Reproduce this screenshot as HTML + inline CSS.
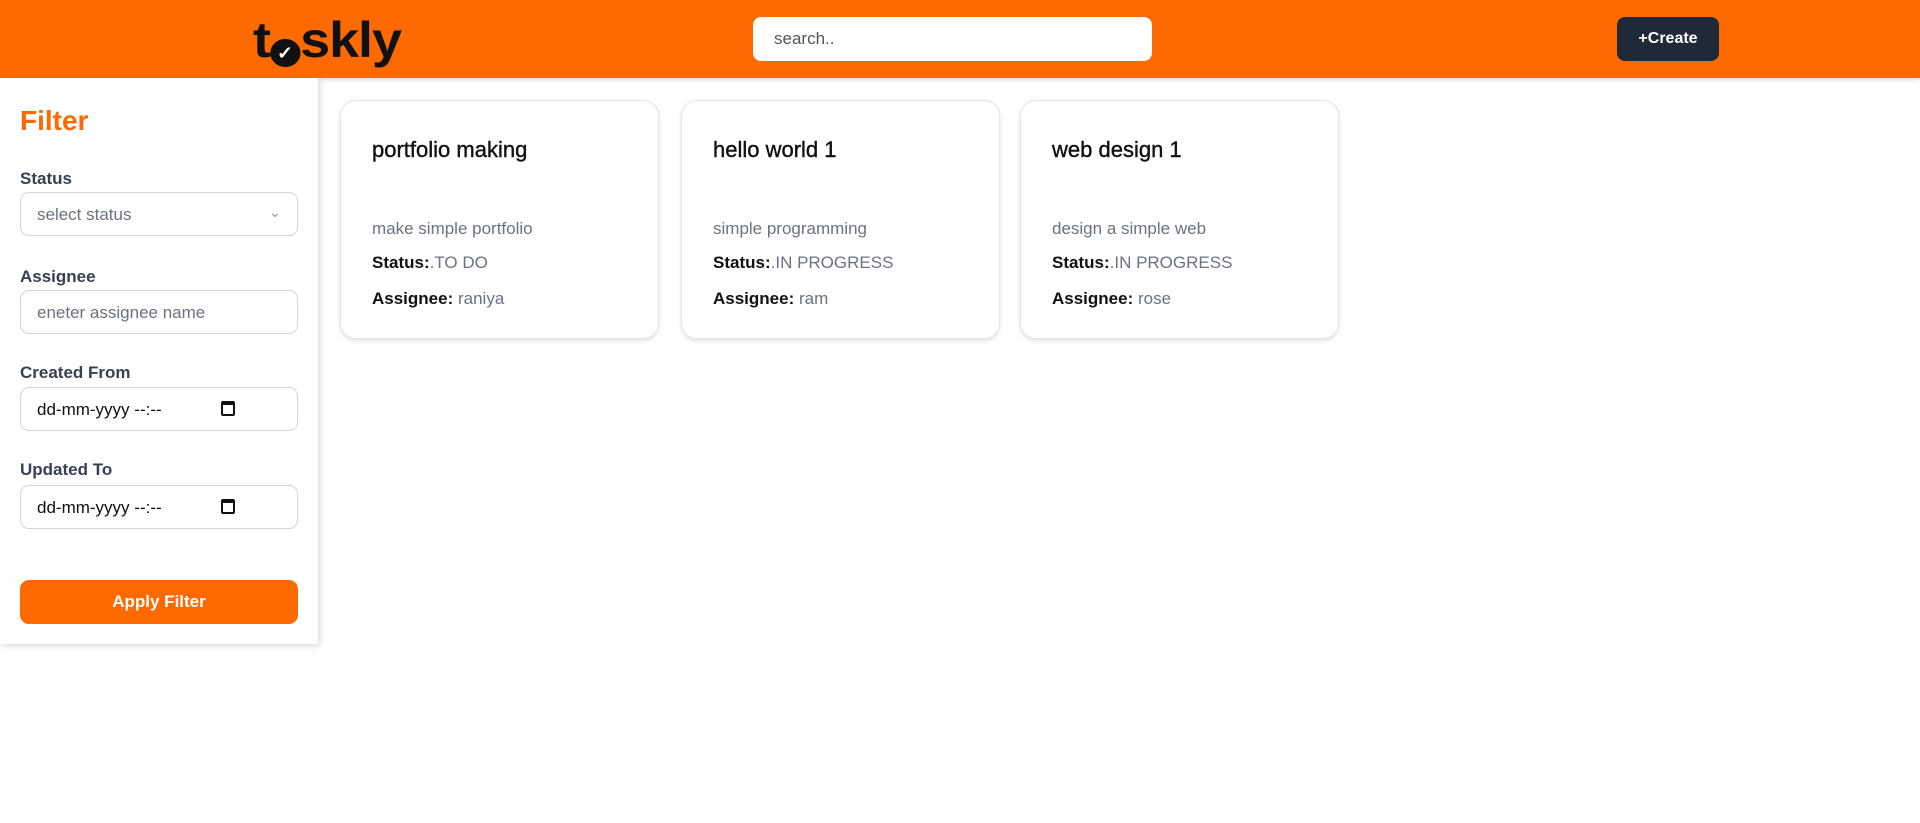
<!DOCTYPE html>
<html><head><meta charset="utf-8"><style>
*{box-sizing:border-box;margin:0;padding:0}
body{width:1920px;height:823px;background:#fff;font-family:"Liberation Sans",sans-serif;position:relative;overflow:hidden}
.hdr{position:absolute;left:0;top:0;width:1920px;height:78px;background:#ff6a00;box-shadow:0 2px 4px rgba(0,0,0,.15)}
.logo{position:absolute;left:253px;top:11px;font-size:50px;font-weight:bold;color:#111;letter-spacing:-1px;transform:scaleX(1.08);transform-origin:left}
.search{position:absolute;left:753px;top:17px;width:399px;height:44px;background:#fff;border-radius:8px;font-size:17px;color:#555;padding:12px 0 0 21px}
.create{position:absolute;left:1617px;top:17px;width:102px;height:44px;background:#1f2937;border-radius:8px;color:#fff;font-weight:bold;font-size:16px;text-align:center;line-height:44px}
.side{position:absolute;left:0;top:78px;width:318px;height:566px;background:#fff;box-shadow:2px 2px 6px rgba(0,0,0,.15)}
.ft{position:absolute;left:20px;top:27px;font-size:28px;font-weight:bold;color:#ff6a00}
.lbl{position:absolute;left:20px;font-size:17px;font-weight:bold;color:#374151}
.inp{position:absolute;left:20px;width:278px;height:44px;border:1px solid #d1d5db;border-radius:9px;font-size:17px;color:#6b7280;padding:12px 0 0 16px}
.dt{color:#111}
.cal{position:absolute;left:200px;top:13px;width:14px;height:15px;border:2px solid #111;border-top-width:4px;border-radius:2px}
.btn{position:absolute;left:20px;top:502px;width:278px;height:44px;background:#ff6a00;border-radius:9px;color:#fff;font-weight:bold;font-size:17px;text-align:center;line-height:44px}
.card{position:absolute;top:100px;width:319px;height:239px;border:1px solid #e5e7eb;border-radius:16px;box-shadow:0 2px 5px rgba(0,0,0,.12);background:#fff}
.card h3{position:absolute;left:31px;top:36px;font-size:22px;font-weight:normal;color:#111;-webkit-text-stroke:.4px #111}
.card p{position:absolute;left:31px;font-size:17px;color:#6b7280}
.card b{color:#111}
</style></head><body>
<div class="hdr">
<div class="logo">t<span style="display:inline-block;width:28px;height:28px;border:4px solid #111;border-radius:50%;background:#111;vertical-align:-2px;position:relative;color:#fff;font-size:18px;line-height:20px;text-align:center;letter-spacing:0">✓</span>skly</div>
<div class="search">search..</div>
<div class="create">+Create</div>
</div>
<div class="side">
<div class="ft">Filter</div>
<div class="lbl" style="top:91px">Status</div>
<div class="inp" style="top:114px">select status<span style="position:absolute;left:248px;top:11px;color:#999;font-size:14px">&#8964;</span></div>
<div class="lbl" style="top:189px">Assignee</div>
<div class="inp" style="top:212px">eneter assignee name</div>
<div class="lbl" style="top:285px">Created From</div>
<div class="inp dt" style="top:309px">dd-mm-yyyy --:--<span class="cal"></span></div>
<div class="lbl" style="top:382px">Updated To</div>
<div class="inp dt" style="top:407px">dd-mm-yyyy --:--<span class="cal"></span></div>
<div class="btn">Apply Filter</div>
</div>
<div class="card" style="left:340px"><h3>portfolio making</h3><p style="top:118px">make simple portfolio</p><p style="top:152px"><b>Status:</b>.TO DO</p><p style="top:188px"><b>Assignee:</b> raniya</p></div>
<div class="card" style="left:681px"><h3>hello world 1</h3><p style="top:118px">simple programming</p><p style="top:152px"><b>Status:</b>.IN PROGRESS</p><p style="top:188px"><b>Assignee:</b> ram</p></div>
<div class="card" style="left:1020px"><h3>web design 1</h3><p style="top:118px">design a simple web</p><p style="top:152px"><b>Status:</b>.IN PROGRESS</p><p style="top:188px"><b>Assignee:</b> rose</p></div>
</body></html>
